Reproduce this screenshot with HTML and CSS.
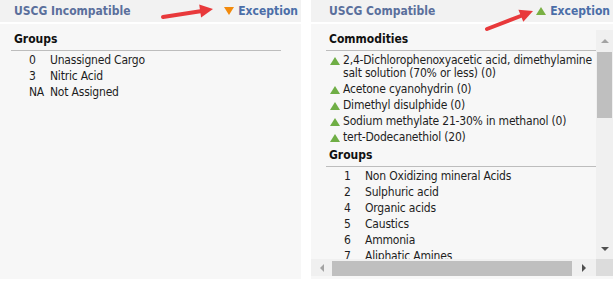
FILE: index.html
```html
<!DOCTYPE html>
<html lang="en">
<head>
    <meta charset="UTF-8">
    <meta name="viewport" content="width=device-width, initial-scale=1.0">
    <link rel="stylesheet" href="styles.css">
    <title>USCG Compatibility</title>
</head>
<body>

    <div class="page">
        <!-- Panel incompatibles -->
        <section class="panel panelLeft">
            <div class="panelHead">
                <span class="title">USCG Incompatible</span>
                <span class="exception"><span class="tri triDown"></span>Exception</span>
            </div>
            <div class="panelBody">
                <div class="list listLeft">
                    <div class="listHead">Groups</div>
                    <div class="group"><span class="num">0</span>Unassigned Cargo</div>
                    <div class="group"><span class="num">3</span>Nitric Acid</div>
                    <div class="group"><span class="num">NA</span>Not Assigned</div>
                </div>
            </div>
        </section>

        <!-- Panel compatibles -->
        <section class="panel panelRight">
            <div class="panelHead">
                <span class="title">USCG Compatible</span>
                <span class="exception"><span class="tri triUp"></span>Exception</span>
            </div>
            <div class="panelBody">
                <div class="scroller">
                    <div class="scrollView">
                        <div class="list listRight">
                            <div class="listHead">Commodities</div>
                            <div class="item"><span class="tri triSmall"></span><span class="itemText">2,4-Dichlorophenoxyacetic acid, dimethylamine<br>salt solution (70% or less) (0)</span></div>
                            <div class="item"><span class="tri triSmall"></span><span class="itemText">Acetone cyanohydrin (0)</span></div>
                            <div class="item"><span class="tri triSmall"></span><span class="itemText">Dimethyl disulphide (0)</span></div>
                            <div class="item"><span class="tri triSmall"></span><span class="itemText">Sodium methylate 21-30% in methanol (0)</span></div>
                            <div class="item"><span class="tri triSmall"></span><span class="itemText">tert-Dodecanethiol (20)</span></div>
                            <div class="listHead listHeadNext">Groups</div>
                            <div class="group"><span class="num">1</span>Non Oxidizing mineral Acids</div>
                            <div class="group"><span class="num">2</span>Sulphuric acid</div>
                            <div class="group"><span class="num">4</span>Organic acids</div>
                            <div class="group"><span class="num">5</span>Caustics</div>
                            <div class="group"><span class="num">6</span>Ammonia</div>
                            <div class="group"><span class="num">7</span>Aliphatic Amines</div>
                            <div class="group"><span class="num">8</span>Alkanolamines</div>
                        </div>
                    </div>
                    <div class="vbar">
                        <div class="sbBtn"><span class="arrow arrowUp"></span></div>
                        <div class="vThumb"></div>
                        <div class="vSpace"></div>
                        <div class="sbBtn"><span class="arrow arrowDown"></span></div>
                    </div>
                    <div class="hbar">
                        <div class="sbBtn hBtnLeft"><span class="arrow arrowLeft"></span></div>
                        <div class="hThumb"></div>
                        <div class="sbBtn hBtnRight"><span class="arrow arrowRight"></span></div>
                    </div>
                    <div class="corner"></div>
                </div>
            </div>
        </section>
    </div>

    <!-- Flechas rojas de anotación -->
    <svg class="marks" width="615" height="281" viewBox="0 0 615 281">
        <line x1="163" y1="17" x2="202" y2="11" stroke="#e8393b" stroke-width="4" stroke-linecap="round"/>
        <polygon points="213,9 201.1,17.5 199.2,4.6" fill="#e8393b"/>
        <line x1="487" y1="29" x2="522" y2="15.5" stroke="#e8393b" stroke-width="4" stroke-linecap="round"/>
        <polygon points="533,11 523.3,21.8 518.4,9.7" fill="#e8393b"/>
    </svg>

</body>
</html>
```

FILE: styles.css
```css
body {
    margin: 0;
    font-family: "DejaVu Sans Condensed", "Liberation Sans", sans-serif;
    font-size: 12px;
    color: #1e1e1e;
    background-color: #ffffff;
}

.page {
    display: flex;
    gap: 10px;
    height: 279px;
}

.panel {
    display: flex;
    flex-direction: column;
    gap: 2px;
}

.panelLeft {
    width: 305px;
    margin-left: -4px;
}

.panelRight {
    width: 302px;
}

.panelHead {
    display: flex;
    justify-content: space-between;
    align-items: center;
    height: 22px;
    padding: 0 3px 0 18px;
    background-color: #f2f2f2;
    font-size: 12px;
    font-weight: bold;
    white-space: nowrap;
}

.title {
    color: #5a6f9c;
}

.exception {
    display: flex;
    align-items: center;
    gap: 4px;
    color: #4b6ea8;
}

.tri {
    display: inline-block;
    width: 0;
    height: 0;
}

.triDown {
    border-left: 5px solid transparent;
    border-right: 5px solid transparent;
    border-top: 8px solid #f28a0c;
}

.triUp {
    border-left: 5px solid transparent;
    border-right: 5px solid transparent;
    border-bottom: 8px solid #79b043;
    margin-top: -1px;
}

.panelBody {
    flex: 1;
    background-color: #f7f7f7;
    padding-top: 6px;
    min-height: 0;
}

.panelLeft .panelBody {
    padding-left: 15px;
}

.panelRight .panelBody {
    padding-bottom: 3px;
}

.listLeft {
    width: 270px;
}

.listHead {
    font-weight: bold;
    line-height: 16px;
    padding: 1px 3px 3px;
    border-bottom: 1px solid #bdbdbd;
    margin-bottom: 1px;
    color: #111111;
}

.listHeadNext {
    margin-top: 1px;
}

.group {
    display: flex;
    line-height: 16px;
    padding-left: 18px;
    white-space: nowrap;
    letter-spacing: -0.2px;
}

.num {
    width: 21px;
    flex-shrink: 0;
}

.item {
    display: flex;
    align-items: flex-start;
    line-height: 13px;
    padding: 2px 0 1px 4px;
    white-space: nowrap;
    letter-spacing: -0.2px;
}

.triSmall {
    border-left: 5px solid transparent;
    border-right: 5px solid transparent;
    border-bottom: 8px solid #6fae45;
    margin: 3px 3px 0 0;
}

/* Zona con barras de desplazamiento */
.scroller {
    display: grid;
    grid-template-columns: 285px 17px;
    grid-template-rows: 229px 17px;
    height: 246px;
}

.scrollView {
    overflow: hidden;
    padding-left: 15px;
}

.listRight {
    width: 290px;
}

.vbar {
    display: flex;
    flex-direction: column;
    background-color: #f0f0f0;
}

.sbBtn {
    display: flex;
    align-items: center;
    justify-content: center;
    height: 21px;
    flex-shrink: 0;
}

.vThumb {
    height: 66px;
    margin: 1px 1px 0;
    background-color: #bfbfbf;
}

.vSpace {
    flex: 1;
}

.hbar {
    display: flex;
    background-color: #f0f0f0;
}

.hBtnLeft {
    width: 21px;
    height: 17px;
}

.hThumb {
    width: 240px;
    margin: 2px 0 0;
    background-color: #bfbfbf;
}

.hBtnRight {
    width: 24px;
    height: 17px;
}

.corner {
    background-color: #dcdcdc;
}

.arrow {
    display: inline-block;
    width: 0;
    height: 0;
}

.arrowUp {
    border-left: 4px solid transparent;
    border-right: 4px solid transparent;
    border-bottom: 4px solid #a3a3a3;
}

.arrowDown {
    border-left: 4px solid transparent;
    border-right: 4px solid transparent;
    border-top: 4px solid #505050;
}

.arrowLeft {
    border-top: 4px solid transparent;
    border-bottom: 4px solid transparent;
    border-right: 4px solid #a3a3a3;
}

.arrowRight {
    border-top: 4px solid transparent;
    border-bottom: 4px solid transparent;
    border-left: 4px solid #505050;
}

.marks {
    position: absolute;
    left: 0;
    top: 0;
    pointer-events: none;
}
```
